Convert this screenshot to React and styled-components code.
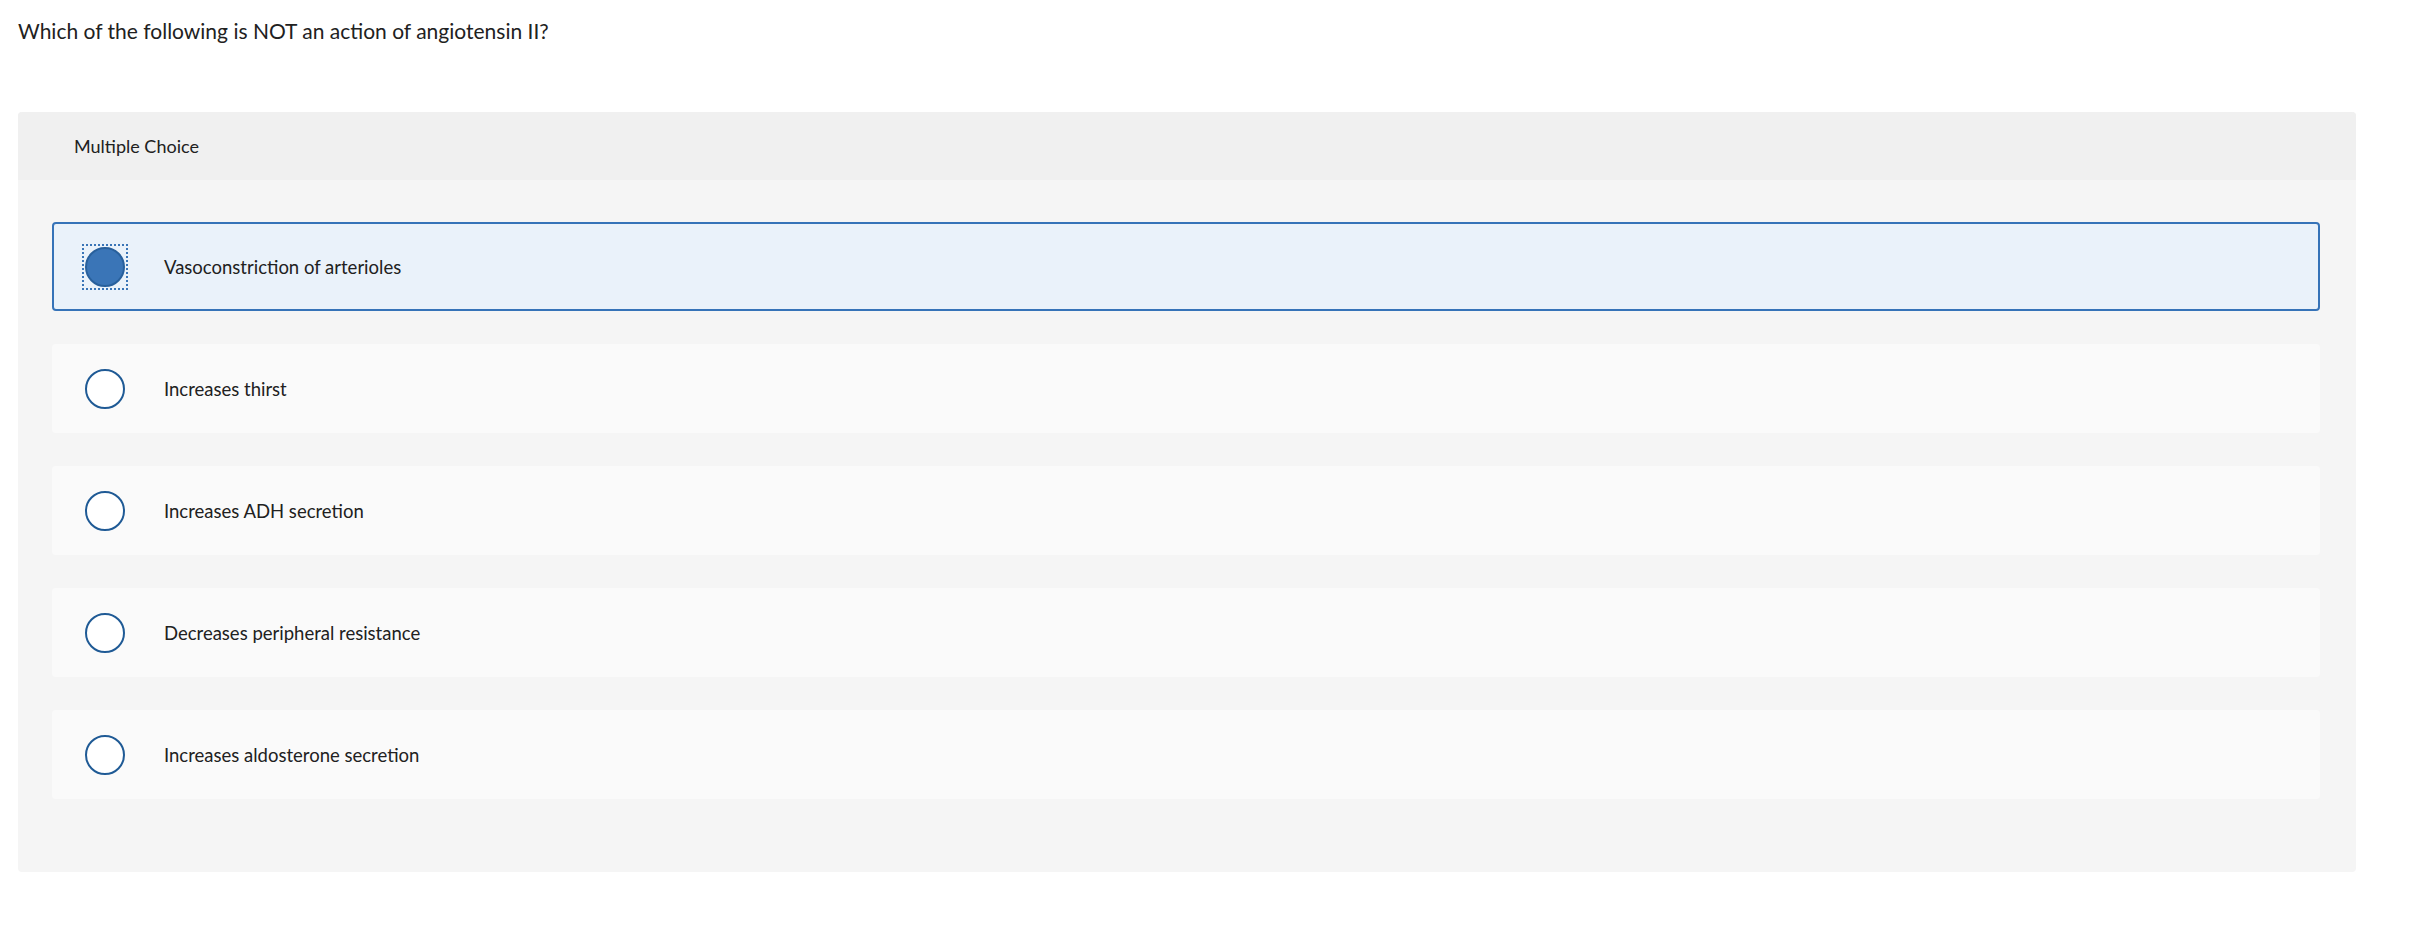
import styled, { createGlobalStyle } from "styled-components";

const GlobalStyle = createGlobalStyle`
  html, body {
    margin: 0;
    padding: 0;
    background: #ffffff;
  }
  body {
    font-family: "Lato", "Liberation Sans", sans-serif;
    color: #212121;
  }
`;

const Page = styled.div`
  padding: 0 76px 0 18px;
`;

const Question = styled.h2`
  margin: 0;
  padding-top: 18px;
  height: 112px;
  box-sizing: border-box;
  font-size: 21px;
  font-weight: 400;
  color: #212121;
`;

const Panel = styled.div`
  background: #f5f5f5;
  border-radius: 4px;
  overflow: hidden;
  padding-bottom: 73px;
`;

const PanelHeader = styled.div`
  height: 68px;
  background: #f0f0f0;
  display: flex;
  align-items: center;
  padding-left: 56px;
  font-size: 18px;
`;

const Options = styled.div`
  display: flex;
  flex-direction: column;
  gap: 33px;
  padding: 42px 36px 0 34px;
`;

const Option = styled.label`
  display: flex;
  align-items: center;
  height: 89px;
  box-sizing: border-box;
  border-radius: 4px;
  padding-left: ${(p) => (p.selected ? "32px" : "34px")};
  background: ${(p) => (p.selected ? "#eaf2fa" : "#fafafa")};
  border: ${(p) => (p.selected ? "2px solid #3673b8" : "none")};
  cursor: pointer;
`;

const RadioWrap = styled.span`
  width: 42px;
  height: 42px;
  display: flex;
  align-items: center;
  justify-content: center;
  box-sizing: border-box;
  outline: ${(p) => (p.focused ? "2px dotted #3a75b7" : "none")};
  margin-left: -2px;
`;

const Radio = styled.span`
  width: 40px;
  height: 40px;
  border-radius: 50%;
  box-sizing: border-box;
  border: 2px solid ${(p) => (p.checked ? "#28609c" : "#1f5a95")};
  background: ${(p) => (p.checked ? "#3a75b7" : "#ffffff")};
`;

const OptionText = styled.span`
  margin-left: 38px;
  font-size: 18.5px;
  color: #212121;
`;

const choices = [
  "Vasoconstriction of arterioles",
  "Increases thirst",
  "Increases ADH secretion",
  "Decreases peripheral resistance",
  "Increases aldosterone secretion",
];

export default function App() {
  const selected = 0;
  return (
    <Page>
      <GlobalStyle />
      <Question>Which of the following is NOT an action of angiotensin II?</Question>
      <Panel>
        <PanelHeader>Multiple Choice</PanelHeader>
        <Options>
          {choices.map((c, i) => (
            <Option key={c} selected={i === selected}>
              <RadioWrap focused={i === selected}>
                <Radio checked={i === selected} />
              </RadioWrap>
              <OptionText>{c}</OptionText>
            </Option>
          ))}
        </Options>
      </Panel>
    </Page>
  );
}
